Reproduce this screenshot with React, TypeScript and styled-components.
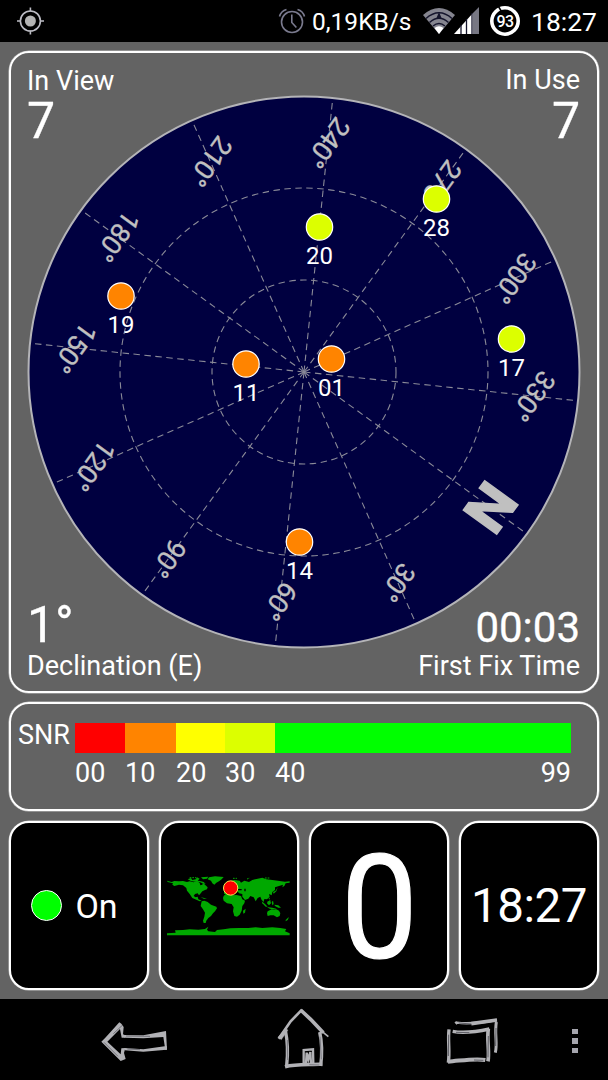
import React from "react";
import styled, { createGlobalStyle } from "styled-components";

const GlobalStyle = createGlobalStyle`
  * { box-sizing: border-box; }
  body { margin: 0; background: #000; }
`;

const Screen = styled.div`
  width: 608px;
  height: 1080px;
  display: flex;
  flex-direction: column;
  background: #000;
  color: #fff;
  font-family: Roboto, "Liberation Sans", sans-serif;
  overflow: hidden;
`;

const StatusBar = styled.header`
  height: 42px;
  display: flex;
  align-items: center;
  padding: 0 11px 0 16px;
  font-size: 26px;
  line-height: 42px;
  white-space: nowrap;
`;

const StatusIcon = styled.svg<{ $gap?: number }>`
  display: block;
  flex: none;
  margin-left: ${(p) => p.$gap ?? 0}px;
`;

const Spacer = styled.div`
  flex: 1;
`;

const StatusText = styled.span<{ $size: number; $width: number; $gap: number }>`
  flex: none;
  width: ${(p) => p.$width}px;
  margin-left: ${(p) => p.$gap}px;
  font-size: ${(p) => p.$size}px;
  padding-top: 2px;
`;

const Content = styled.main`
  height: 957px;
  background: #636363;
  padding: 9px 9px 0;
  display: flex;
  flex-direction: column;
  gap: 9px;
`;

const Panel = styled.section`
  border: 2px solid #fff;
  border-radius: 20px;
  box-shadow: 0 0 0 0.5px rgba(255, 255, 255, 0.6);
`;

const SkyPanel = styled(Panel)`
  height: 642px;
  display: grid;
  grid-template: 100% / 100%;
  & > * { grid-area: 1 / 1; }
`;

const SkyPlot = styled.svg`
  place-self: center;
  display: block;
`;

const Corners = styled.div`
  display: grid;
  grid-template-columns: auto auto;
  align-content: space-between;
  justify-content: space-between;
  padding: 13px 17px 10px 16px;
`;

const Corner = styled.div<{ $right?: boolean }>`
  display: flex;
  flex-direction: column;
  text-align: ${(p) => (p.$right ? "right" : "left")};
`;

const CornerLabel = styled.span<{ $lift?: number }>`
  font-size: 27px;
  line-height: 30px;
  margin-top: ${(p) => -(p.$lift ?? 0)}px;
  margin-bottom: ${(p) => p.$lift ?? 0}px;
`;

const CornerValue = styled.span<{ $size?: number; $drop?: number }>`
  font-size: ${(p) => p.$size ?? 50}px;
  line-height: 48px;
  margin-top: ${(p) => p.$drop ?? 0}px;
  margin-bottom: ${(p) => -(p.$drop ?? 0)}px;
  -webkit-text-stroke: 0.3px #fff;
`;

const SnrPanel = styled(Panel)`
  height: 109px;
  display: flex;
  padding: 19px 26px 0 7px;
`;

const SnrTitle = styled.span`
  width: 57px;
  font-size: 27px;
  line-height: 24px;
`;

const SnrScale = styled.div`
  display: grid;
  grid-template-columns: 50px 51px 49px 50px 296px;
  grid-template-rows: 30px 40px;
`;

const SnrSegment = styled.div<{ $color: string }>`
  background: ${(p) => p.$color};
`;

const SnrTick = styled.div`
  display: flex;
  justify-content: space-between;
  font-size: 27px;
  line-height: 40px;
`;

const Tiles = styled.div`
  display: grid;
  grid-template-columns: repeat(4, 140px);
  gap: 10px;
  height: 169px;
  margin-top: 1px;
`;

const Tile = styled(Panel)`
  background: #000;
  display: flex;
  align-items: center;
  justify-content: center;
`;

const Led = styled.i`
  width: 31px;
  height: 31px;
  border-radius: 50%;
  background: #00ff00;
  border: 1.5px solid #fff;
`;

const TileText = styled.span<{ $size: number; $spacing?: number }>`
  font-size: ${(p) => p.$size}px;
  letter-spacing: ${(p) => p.$spacing ?? 0}px;
  line-height: 1;
`;

const ClockText = styled(TileText)`
  padding-top: 3px;
`;

const CountText = styled(TileText)`
  margin-top: 6px;
  transform: scaleX(0.95);
  -webkit-text-stroke: 1.2px #fff;
`;

const GpsState = styled.div`
  display: flex;
  align-items: center;
  gap: 13px;
  margin-right: 9px;
`;

const NavBar = styled.nav`
  flex: 1;
  display: flex;
  align-items: center;
  padding-left: 100px;
`;

const C = 277;
const HEADING = 126;
const polar = (deg: number, r: number) => {
  const a = (deg * Math.PI) / 180;
  return [C + r * Math.sin(a), C - r * Math.cos(a)];
};

const satellites = [
  { id: "20", x: 319.5, y: 227, color: "#dcff00" },
  { id: "28", x: 436.5, y: 199, color: "#dcff00" },
  { id: "17", x: 511.5, y: 339, color: "#dcff00" },
  { id: "19", x: 121, y: 296, color: "#ff8400" },
  { id: "11", x: 246, y: 364, color: "#ff8400" },
  { id: "01", x: 331.5, y: 359, color: "#ff8400" },
  { id: "14", x: 299.5, y: 542, color: "#ff8400" },
];

const Radar = () => (
  <SkyPlot width="554" height="554" viewBox="0 0 554 554">
    <circle cx={C} cy={C} r="275.5" fill="#000040" stroke="#b4b4b8" strokeWidth="2" />
    <g fill="none" stroke="#8a8a98" strokeWidth="1.1" strokeDasharray="6.5 4.5">
      <circle cx={C} cy={C} r="92" />
      <circle cx={C} cy={C} r="184" />
      {Array.from({ length: 12 }, (_, i) => {
        const [x, y] = polar(HEADING + i * 30, 275);
        return <line key={i} x1={C} y1={C} x2={x} y2={y} />;
      })}
    </g>
    <g fill="#c0c0c0" fontFamily="Roboto, sans-serif" textAnchor="middle">
      {Array.from({ length: 12 }, (_, i) => {
        const [x, y] = polar(HEADING + i * 30, 230.5);
        return (
          <text
            key={i}
            transform={`translate(${x} ${y}) rotate(${HEADING})${i ? "" : " scale(1.08 1)"}`}
            y={i ? 9.5 : 20.5}
            fontSize={i ? 27 : 58}
            fontWeight={i ? 400 : 700}
            letterSpacing={i ? -0.4 : 0}
            stroke="#c0c0c0"
            strokeWidth={i ? 0.3 : 1.4}
          >
            {i ? `${i * 30}°` : "N"}
          </text>
        );
      })}
    </g>
    <g fontFamily="Roboto, sans-serif" fontSize="24" textAnchor="middle">
      {satellites.map((s) => (
        <g key={s.id} transform={`translate(${s.x - 27} ${s.y - 95})`}>
          <circle r="13.2" fill={s.color} stroke="#fff" strokeWidth="1.2" />
          <text y="36.8" fill="#fff">{s.id}</text>
        </g>
      ))}
    </g>
  </SkyPlot>
);

const land = [
  "M36 64L50 68L58 65L72 66L84 65L96 68L104 66L116 69L126 66L134 70L136 78L142 76L144 70L150 76L158 84L156 90L150 92L142 96L136 103L132 108L128 102L120 104L116 110L122 114L128 112L130 120L140 124L134 126L124 121L112 116L104 104L96 94L94 86L84 78L72 76L58 80L52 76L54 72L38 68Z",
  "M98 60L108 56L112 62L122 60L126 54L134 58L128 64L138 66L146 68L152 74L142 72L134 68L120 67L108 65Z",
  "M138 54L160 52L156 58L144 60Z",
  "M162 54L180 51L206 53L200 60L192 66L184 70L178 76L172 72L168 64L158 60Z",
  "M140 126L148 124L158 128L168 136L184 142L186 147L180 156L174 162L168 170L160 176L154 184L152 191L146 191L144 184L148 172L150 160L144 150L137 140Z",
  "M206 110L212 104L228 102L232 108L244 107L258 110L262 120L270 124L268 132L262 140L260 154L254 166L246 172L238 170L234 156L236 144L230 134L216 132L206 124L204 116Z",
  "M264 154L272 148L270 160L265 163Z",
  "M207 104L208 96L216 96L212 88L208 82L206 78L210 74L216 80L222 84L226 76L226 66L238 62L254 64L258 70L268 64L282 68L292 62L308 58L322 55L334 60L352 62L374 65L390 67L404 66L404 70L392 72L388 80L382 84L384 76L372 80L360 84L360 92L352 98L350 108L342 104L344 112L336 120L328 119L326 128L320 122L316 112L308 116L302 126L296 114L286 110L280 118L270 122L262 112L262 104L252 102L248 96L240 104L232 94L224 94L216 104Z",
  "M354 98L362 94L368 84L364 96L356 103Z",
  "M320 126L330 134L338 142L332 142L322 132Z",
  "M338 126L346 124L348 132L342 138L336 132Z",
  "M336 143L352 145L364 148L362 151L344 148Z",
  "M350 128L354 124L356 134L352 138Z",
  "M358 136L370 138L378 145L370 145L360 140Z",
  "M338 156L350 150L360 152L364 150L372 154L376 162L374 170L366 174L356 168L346 168L338 170L336 162Z",
  "M392 182L398 176L402 174L398 182L392 186Z",
  "M137 114L148 116L156 119L146 118Z",
  "M60 213L84 212L104 210L130 211L150 209L160 202L156 211L160 216L180 218L186 212L206 210L226 207L252 206L280 206L302 204L322 206L352 204L376 206L394 209L390 216L404 222L404 228L36 228L36 222L62 220Z",
];

const WorldMap = () => (
  <svg width="124" height="61" viewBox="36 47 372 183">
    <g fill="#00a800">
      {land.map((d, i) => (
        <path key={i} d={d} />
      ))}
    </g>
    <path d="M248 91h12M270 88v8" stroke="#000" strokeWidth="4" />
    <g fill="none" stroke="#00a800" strokeWidth="3" strokeDasharray="5 3">
      <path d="M234 57h12M276 59l8-3M330 56h16M104 55h20M342 115l3 10" />
    </g>
    <circle cx="227" cy="86" r="21.5" fill="#f00" stroke="#ffe650" strokeWidth="3" />
  </svg>
);

const BackIcon = () => (
  <svg width="68" height="42" viewBox="0 0 204 126" fill="#b2b2b6">
    <path d="M58 10L64 14L71 24L69 46L74 48L74 56L65 56L60 30L22 68L62 106L64 88L76 87L72 102L77 120L62 126L50 114L4 68L18 54Z" />
    <path d="M72 48L130 49L198 36L201 92L196 93L190 54L130 58L72 56Z" />
    <path d="M74 87L130 91L194 82L201 82L200 92L130 98L74 94Z" />
    <path d="M78 51L150 52M82 90L120 92M12 70L54 112M68 18L40 44" stroke="#33333d" strokeWidth="1.5" />
  </svg>
);

const HomeIcon = () => (
  <svg width="54" height="62" viewBox="0 0 162 186" fill="none" stroke="#b2b2b6">
    <path d="M78 5L44 40L8 92" strokeWidth="8" />
    <path d="M6 88L16 95L36 66L28 62Z" fill="#b2b2b6" strokeWidth="1" />
    <path d="M74 6L104 34L142 74" strokeWidth="11" />
    <path d="M138 70L157 86" strokeWidth="5" />
    <path d="M28 66C35 100 37 130 32 172" strokeWidth="10" />
    <path d="M131 72C138 102 139 134 134 174" strokeWidth="10" />
    <path d="M27 176C62 167 100 171 139 168" strokeWidth="11" />
    <path d="M83 168L83 126L111 124L112 168M90 166L92 134L97 154L103 132L105 166" strokeWidth="7" />
    <path d="M132 86L136 154M34 96L35 156M100 170L130 171" stroke="#44444e" strokeWidth="1.5" />
  </svg>
);

const RecentIcon = () => (
  <svg width="54" height="48" viewBox="0 0 162 144" fill="none" stroke="#b2b2b6">
    <path d="M28 17L34 24M32 20C64 24 110 20 152 12" strokeWidth="7" />
    <path d="M76 23L153 12" strokeWidth="11" />
    <path d="M151 18C145 54 155 82 148 110" strokeWidth="9" />
    <path d="M20 46C52 52 88 48 130 39" strokeWidth="10" />
    <path d="M9 40C5 78 12 106 7 140" strokeWidth="10" />
    <path d="M127 38C122 72 131 106 126 136" strokeWidth="11" />
    <path d="M6 137C46 134 88 126 118 132" strokeWidth="12" />
    <path d="M8 56L7 120M127 60L126 124M150 36L149 90M30 49L70 50M84 132L112 133M38 21L76 24" stroke="#33333d" strokeWidth="2" />
  </svg>
);

const NavItem = styled.div<{ $gap?: number; $shift?: number }>`
  margin-left: ${(p) => p.$gap ?? 0}px;
  margin-top: ${(p) => p.$shift ?? 0}px;
  line-height: 0;
`;

const MenuDots = styled.div<{ $gap: number }>`
  margin-left: ${(p) => p.$gap}px;
  display: grid;
  gap: 4px;
  margin-top: 3px;
  & > i { width: 6px; height: 5.4px; background: #a5a5ad; }
`;

export default function App() {
  return (
    <Screen>
      <GlobalStyle />
      <StatusBar>
        <StatusIcon width="28" height="28" viewBox="0 0 28 28" fill="none" stroke="#bcbcc4" strokeWidth="1.6">
          <circle cx="14.4" cy="14" r="10" />
          <circle cx="14.4" cy="14" r="5.5" fill="#b4b4b4" stroke="none" />
          <path d="M14.4 0.5v4M14.4 23.5v4M1 14h4M24 14h4" />
        </StatusIcon>
        <Spacer />
        <StatusIcon width="28" height="28" viewBox="0 0 28 28" fill="none" stroke="#7a7a8e" strokeWidth="1.6">
          <circle cx="14" cy="15" r="10.5" />
          <path d="M13.8 7.5v8l4.6 5M1.5 9.5Q3 4 8.5 2.5M19.5 2.5Q25 4 26.5 9.5" />
        </StatusIcon>
        <StatusText $size={24.5} $width={98} $gap={6}>0,19KB/s</StatusText>
        <StatusIcon $gap={13} width="32" height="28" viewBox="0 0 32 28">
          <path d="M0 8Q16 -6 32 8L16 27Z" fill="#85858f" />
          <g fill="none" stroke="#15152c" strokeWidth="1.5">
            <path d="M3 11.5Q16 0 29 11.5M6.500 15.500Q16 7 25.500 15.500M10 19Q16 14 22 19" />
          </g>
          <path d="M11.500 21Q16 17.500 20.500 21L16 27Z" fill="#fff" />
          <path d="M16 5L13.500 11h5Z" fill="#15152c" />
        </StatusIcon>
        <StatusIcon $gap={-1} width="25" height="28" viewBox="0 0 25 28">
          <path d="M0 27L19 6V27Z" fill="#fff" />
          <path d="M19 6L25 0V27H19Z" fill="#777783" />
          <path d="M7 18v9M12.500 12v15M18 6v21" stroke="#15152c" strokeWidth="1.3" />
        </StatusIcon>
        <StatusIcon $gap={10} width="32" height="32" viewBox="0 0 32 32">
          <circle cx="16" cy="16" r="13.200" fill="none" stroke="#fff" strokeWidth="3.600" />
          <path d="M9.500 1.500L12.500 6.500" stroke="#000" strokeWidth="1.500" />
          <text x="16" y="21.500" fill="#fff" fontSize="16" fontWeight="500" textAnchor="middle" letterSpacing="-0.5">93</text>
        </StatusIcon>
        <StatusText $size={26.5} $width={66} $gap={10}>18:27</StatusText>
      </StatusBar>

      <Content>
        <SkyPanel>
          <Radar />
          <Corners>
            <Corner>
              <CornerLabel>In View</CornerLabel>
              <CornerValue $drop={0.5}>7</CornerValue>
            </Corner>
            <Corner $right>
              <CornerLabel $lift={1.5}>In Use</CornerLabel>
              <CornerValue $drop={0.5}>7</CornerValue>
            </Corner>
            <Corner>
              <CornerValue $drop={-2.5}>1°</CornerValue>
              <CornerLabel>Declination (E)</CornerLabel>
            </Corner>
            <Corner $right>
              <CornerValue $size={42} $drop={0.5}>00:03</CornerValue>
              <CornerLabel>First Fix Time</CornerLabel>
            </Corner>
          </Corners>
        </SkyPanel>

        <SnrPanel>
          <SnrTitle>SNR</SnrTitle>
          <SnrScale>
            <SnrSegment $color="#ff0000" />
            <SnrSegment $color="#ff8400" />
            <SnrSegment $color="#ffff00" />
            <SnrSegment $color="#dcff00" />
            <SnrSegment $color="#00ff00" />
            <SnrTick>00</SnrTick>
            <SnrTick>10</SnrTick>
            <SnrTick>20</SnrTick>
            <SnrTick>30</SnrTick>
            <SnrTick>
              <span>40</span>
              <span>99</span>
            </SnrTick>
          </SnrScale>
        </SnrPanel>

        <Tiles>
          <Tile>
            <GpsState>
              <Led />
              <TileText $size={34}>On</TileText>
            </GpsState>
          </Tile>
          <Tile>
            <WorldMap />
          </Tile>
          <Tile>
            <CountText $size={144}>0</CountText>
          </Tile>
          <Tile>
            <ClockText $size={47.5} $spacing={-0.5}>18:27</ClockText>
          </Tile>
        </Tiles>
      </Content>

      <NavBar>
        <NavItem><BackIcon /></NavItem>
        <NavItem $gap={108} $shift={-2}><HomeIcon /></NavItem>
        <NavItem $gap={116}><RecentIcon /></NavItem>
        <MenuDots $gap={72}><i /><i /><i /></MenuDots>
      </NavBar>
    </Screen>
  );
}
